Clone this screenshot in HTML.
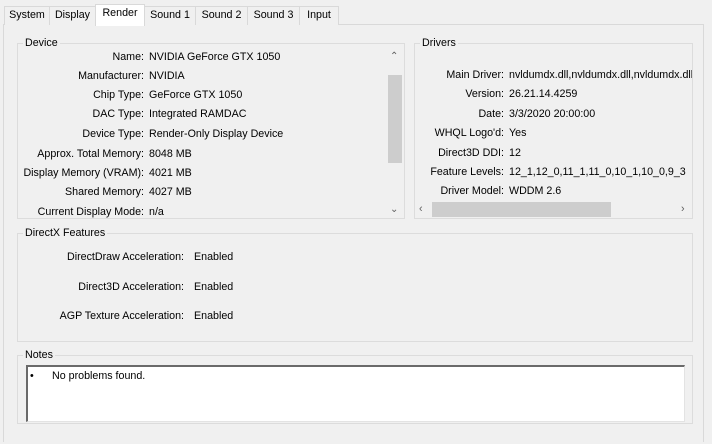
<!DOCTYPE html>
<html><head><style>
*{margin:0;padding:0;box-sizing:border-box}
body{width:712px;height:444px;background:#f0f0f0;font-family:"Liberation Sans",sans-serif;font-size:10.7px;color:#000;position:relative;overflow:hidden}
.a{position:absolute;white-space:nowrap;line-height:13px}
.tab{position:absolute;top:6px;height:19px;border:1px solid #d9d9d9;border-bottom:none;background:#f0f0f0;text-align:center;line-height:17px}
.grp{position:absolute;border:1px solid #dcdcdc}
.gl{position:absolute;background:#f0f0f0;padding:0 2px;line-height:12px}
.r{text-align:right}
</style></head><body>
<div style="position:absolute;left:3px;top:24px;width:701px;height:418px;border:1px solid #d9d9d9;border-bottom:none"></div>
<div class="tab" style="left:4px;width:46px">System</div>
<div class="tab" style="left:49px;width:47px">Display</div>
<div class="tab" style="left:144px;width:52px">Sound 1</div>
<div class="tab" style="left:195px;width:53px">Sound 2</div>
<div class="tab" style="left:247px;width:53px">Sound 3</div>
<div class="tab" style="left:299px;width:40px">Input</div>
<div class="tab" style="left:95px;top:4px;width:50px;height:22px;background:#fff;line-height:17px">Render</div>

<div class="grp" style="left:17px;top:43px;width:388px;height:176px"></div>
<div class="gl" style="left:23px;top:37px">Device</div>
<div style="position:absolute;left:387px;top:48px;width:17px;height:170px;background:#f0f0f0"></div>
<div style="position:absolute;left:388px;top:75px;width:14px;height:88px;background:#cdcdcd"></div>
<div class="a" style="left:390px;top:50px;color:#606060;font-size:10px">&#8963;</div>
<div class="a" style="left:390px;top:203px;color:#606060;font-size:10px">&#8964;</div>
<div class="a r" style="right:568px;top:51px">Name:</div><div class="a" style="left:149px;top:51px">NVIDIA GeForce GTX 1050</div>
<div class="a r" style="right:568px;top:70px">Manufacturer:</div><div class="a" style="left:149px;top:70px">NVIDIA</div>
<div class="a r" style="right:568px;top:89px">Chip Type:</div><div class="a" style="left:149px;top:89px">GeForce GTX 1050</div>
<div class="a r" style="right:568px;top:108px">DAC Type:</div><div class="a" style="left:149px;top:108px">Integrated RAMDAC</div>
<div class="a r" style="right:568px;top:128px">Device Type:</div><div class="a" style="left:149px;top:128px">Render-Only Display Device</div>
<div class="a r" style="right:568px;top:148px">Approx. Total Memory:</div><div class="a" style="left:149px;top:148px">8048 MB</div>
<div class="a r" style="right:568px;top:167px">Display Memory (VRAM):</div><div class="a" style="left:149px;top:167px">4021 MB</div>
<div class="a r" style="right:568px;top:186px">Shared Memory:</div><div class="a" style="left:149px;top:186px">4027 MB</div>
<div style="position:absolute;left:18px;top:205px;width:369px;height:13px;overflow:hidden"><div class="a r" style="right:243px;top:1px">Current Display Mode:</div><div class="a" style="left:131px;top:1px">n/a</div></div>

<div class="grp" style="left:414px;top:43px;width:279px;height:176px"></div>
<div class="gl" style="left:420px;top:37px">Drivers</div>
<div style="position:absolute;left:415px;top:44px;width:277px;height:157px;overflow:hidden">
<div class="a r" style="right:188px;top:25px">Main Driver:</div><div class="a" style="left:94px;top:25px">nvldumdx.dll,nvldumdx.dll,nvldumdx.dll</div>
<div class="a r" style="right:188px;top:44px">Version:</div><div class="a" style="left:94px;top:44px">26.21.14.4259</div>
<div class="a r" style="right:188px;top:64px">Date:</div><div class="a" style="left:94px;top:64px">3/3/2020 20:00:00</div>
<div class="a r" style="right:188px;top:83px">WHQL Logo'd:</div><div class="a" style="left:94px;top:83px">Yes</div>
<div class="a r" style="right:188px;top:103px">Direct3D DDI:</div><div class="a" style="left:94px;top:103px">12</div>
<div class="a r" style="right:188px;top:122px">Feature Levels:</div><div class="a" style="left:94px;top:122px">12_1,12_0,11_1,11_0,10_1,10_0,9_3</div>
<div class="a r" style="right:188px;top:141px">Driver Model:</div><div class="a" style="left:94px;top:141px">WDDM 2.6</div>
</div>
<div style="position:absolute;left:415px;top:201px;width:277px;height:17px;background:#f0f0f0"></div>
<div style="position:absolute;left:432px;top:202px;width:179px;height:15px;background:#cdcdcd"></div>
<div class="a" style="left:419px;top:203px;color:#606060">&lsaquo;</div>
<div class="a" style="left:681px;top:203px;color:#606060">&rsaquo;</div>

<div class="grp" style="left:17px;top:233px;width:676px;height:109px"></div>
<div class="gl" style="left:23px;top:227px">DirectX Features</div>
<div class="a r" style="right:528px;top:251px">DirectDraw Acceleration:</div><div class="a" style="left:194px;top:251px">Enabled</div>
<div class="a r" style="right:528px;top:281px">Direct3D Acceleration:</div><div class="a" style="left:194px;top:281px">Enabled</div>
<div class="a r" style="right:528px;top:310px">AGP Texture Acceleration:</div><div class="a" style="left:194px;top:310px">Enabled</div>

<div class="grp" style="left:17px;top:355px;width:676px;height:69px"></div>
<div class="gl" style="left:23px;top:349px">Notes</div>
<div style="position:absolute;left:26px;top:365px;width:659px;height:57px;background:#fff;border:1px solid #e3e3e3;border-top:2px solid #6a6a6a;border-left:2px solid #6a6a6a"></div>
<div class="a" style="left:30px;top:370px">&bull;</div>
<div class="a" style="left:52px;top:370px">No problems found.</div>
</body></html>
